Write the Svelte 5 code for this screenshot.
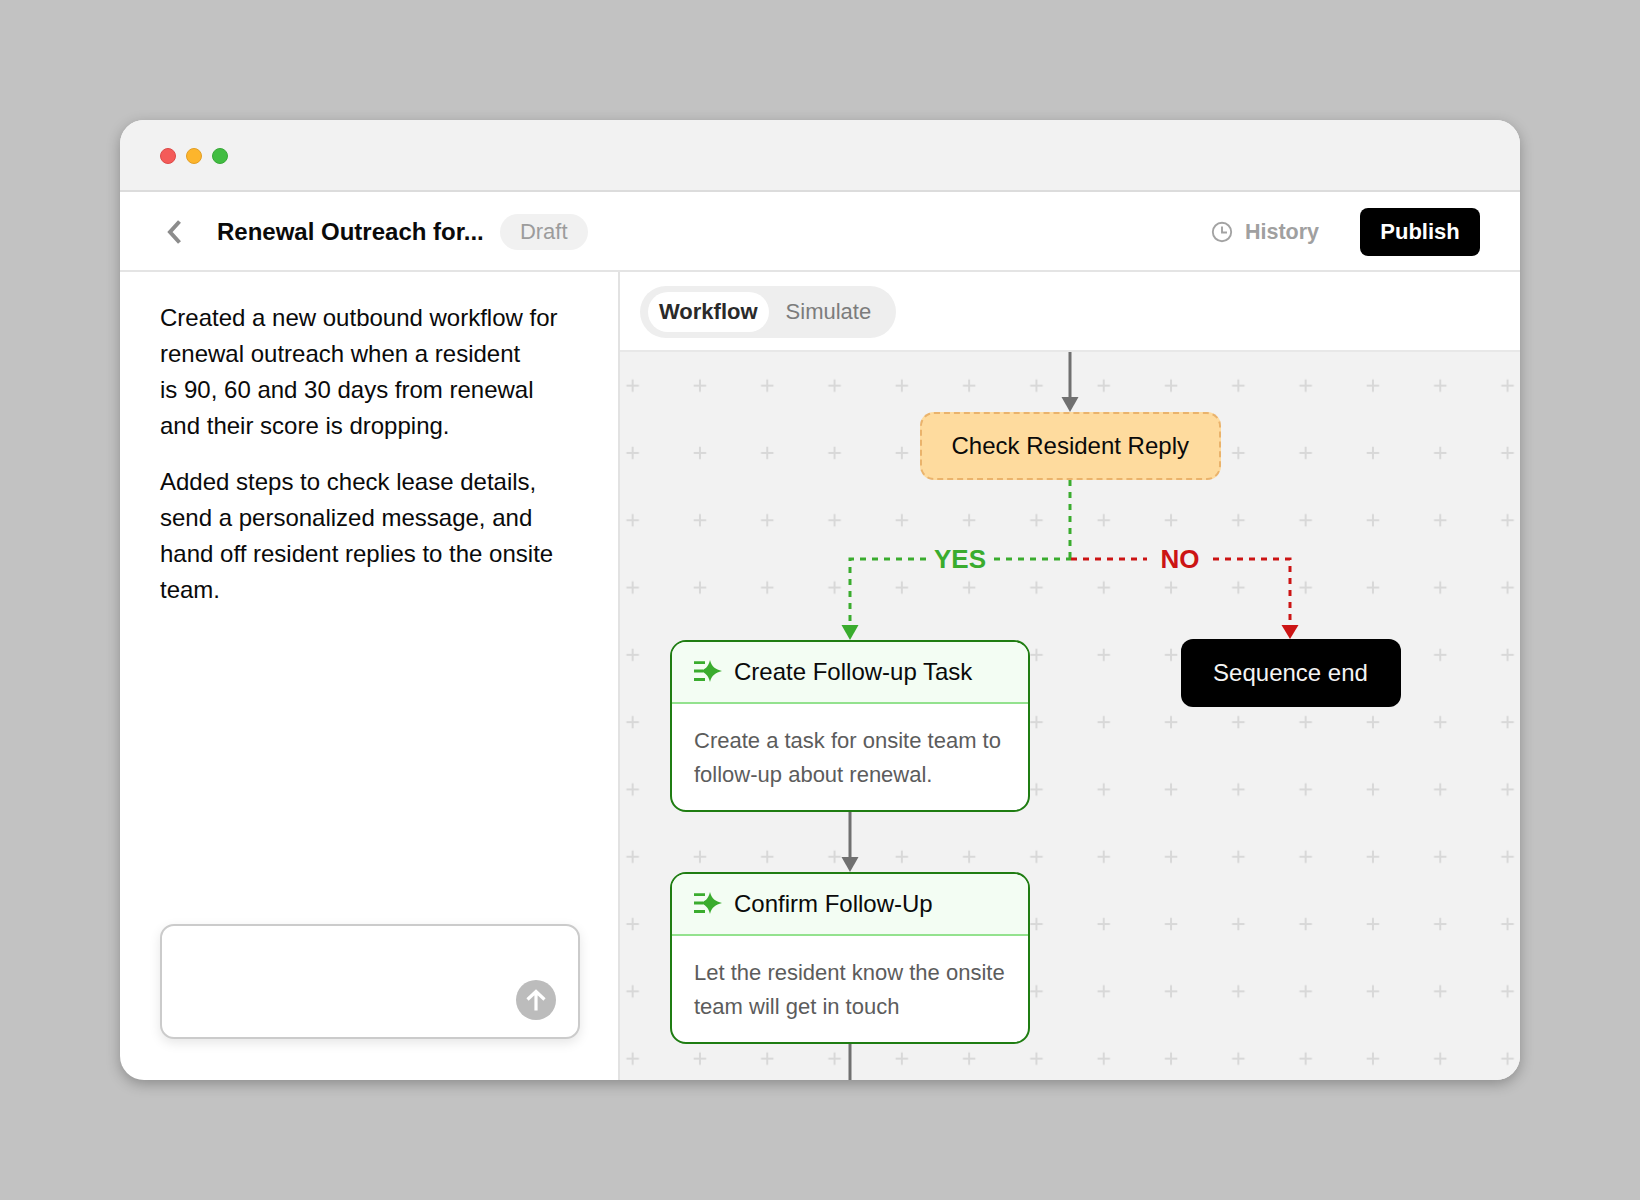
<script lang="ts">
    const tasks = [
        {
            title: 'Create Follow-up Task',
            lines: ['Create a task for onsite team to', 'follow-up about renewal.'],
            top: 288
        },
        {
            title: 'Confirm Follow-Up',
            lines: ['Let the resident know the onsite', 'team will get in touch'],
            top: 520
        }
    ];
</script>

<div class="page">
    <div class="window">
        <div class="titlebar">
            <span class="light red"></span>
            <span class="light yellow"></span>
            <span class="light green"></span>
        </div>

        <header class="topbar">
            <svg class="back" width="16" height="24" viewBox="0 0 16 24">
                <path d="M13.5 1.5 L4 12 L13.5 22.5" fill="none" stroke="#8c8c8c" stroke-width="4" />
            </svg>
            <h1>Renewal Outreach for...</h1>
            <span class="badge">Draft</span>
            <div class="spacer"></div>
            <svg class="clock" width="22" height="22" viewBox="0 0 22 22">
                <circle cx="11" cy="11" r="9.2" fill="none" stroke="#a3a3a3" stroke-width="1.9" />
                <path d="M11 5.5 V11.5 H16" fill="none" stroke="#a3a3a3" stroke-width="1.9" />
            </svg>
            <span class="history">History</span>
            <button class="publish">Publish</button>
        </header>

        <div class="body">
            <aside class="chat">
                <div class="message">
                    <p>
                        Created a new outbound workflow for<br />
                        renewal outreach when a resident<br />
                        is 90, 60 and 30 days from renewal<br />
                        and their score is dropping.
                    </p>
                    <p>
                        Added steps to check lease details,<br />
                        send a personalized message, and<br />
                        hand off resident replies to the onsite<br />
                        team.
                    </p>
                </div>
                <div class="composer">
                    <button class="send" aria-label="Send">
                        <svg width="24" height="24" viewBox="0 0 24 24">
                            <path d="M12 22.5 V4 M3.5 11.5 L12 3.5 L20.5 11.5" fill="none" stroke="#fff" stroke-width="3.2" />
                        </svg>
                    </button>
                </div>
            </aside>

            <section class="editor">
                <div class="tabbar">
                    <div class="tabs">
                        <span class="tab active">Workflow</span>
                        <span class="tab">Simulate</span>
                    </div>
                </div>

                <div class="canvas">
                    <svg class="wires" width="900" height="728" viewBox="0 0 900 728">
                        <defs>
                            <pattern id="plus" x="-21" y="0" width="67.3" height="67.3" patternUnits="userSpaceOnUse">
                                <path d="M33.65 27.4 V39.9 M27.4 33.65 H39.9" stroke="#d8d8d8" stroke-width="2" />
                            </pattern>
                        </defs>
                        <rect width="900" height="728" fill="url(#plus)" />

                        <!-- incoming -->
                        <path d="M450 0 V46" class="solid" />
                        <path d="M441.5 45 H458.5 L450 60 Z" fill="#707070" />

                        <!-- yes branch -->
                        <path d="M450 128 V207" class="dash yes" />
                        <path d="M374 207 H451" class="dash yes" />
                        <path d="M306 207 H230 V274" class="dash yes" />
                        <path d="M221.5 273 H238.5 L230 288 Z" fill="#3aac2e" />
                        <text x="340" y="215.5" class="label" fill="#3aac2e">YES</text>

                        <!-- no branch -->
                        <path d="M451 207 H527" class="dash no" />
                        <path d="M593 207 H670 V274" class="dash no" />
                        <path d="M661.5 273 H678.5 L670 287 Z" fill="#cc1414" />
                        <text x="560" y="215.5" class="label" fill="#cc1414">NO</text>

                        <!-- between the tasks -->
                        <path d="M230 460 V506" class="solid" />
                        <path d="M221.5 505 H238.5 L230 520 Z" fill="#707070" />
                        <path d="M230 691 V728" class="solid" />
                    </svg>

                    <div class="node check">Check Resident Reply</div>

                    {#each tasks as task}
                        <div class="node task" style="top: {task.top}px">
                            <div class="task-head">
                                <svg width="28" height="24" viewBox="0 0 28 24">
                                    <path d="M0 2.7 H11 M0 11 H9 M0 19.5 H11" stroke="#3aac2e" stroke-width="2.8" />
                                    <path d="M16 0 C17.5 6.5 21.5 9.5 28 11 C21.5 12.5 17.5 15.5 16 22 C14.5 15.5 11 12.5 6.5 11 C11 9.5 14.5 6.5 16 0 Z" fill="#3aac2e" />
                                </svg>
                                <span>{task.title}</span>
                            </div>
                            <div class="task-body">
                                {#each task.lines as line}
                                    <div>{line}</div>
                                {/each}
                            </div>
                        </div>
                    {/each}

                    <div class="node end">Sequence end</div>
                </div>
            </section>
        </div>
    </div>
</div>

<style>
    :global(body) {
        margin: 0;
        background: #c2c2c2;
    }

    .page {
        width: 1640px;
        height: 1200px;
        display: flex;
        align-items: center;
        justify-content: center;
        font-family: 'Liberation Sans', Arial, sans-serif;
        color: #0a0a0a;
    }

    .window {
        width: 1400px;
        height: 960px;
        display: flex;
        flex-direction: column;
        background: #fff;
        border-radius: 24px;
        overflow: hidden;
        box-shadow: 0 4px 14px rgba(0, 0, 0, 0.28);
    }

    .titlebar {
        flex: 0 0 72px;
        box-sizing: border-box;
        display: flex;
        align-items: center;
        gap: 10px;
        padding: 2px 0 0 40px;
        background: #f2f2f2;
        border-bottom: 2px solid #dcdcdc;
    }

    .light {
        width: 16px;
        height: 16px;
        box-sizing: border-box;
        border-radius: 50%;
        border: 1px solid;
    }
    .red { background: #f45b59; border-color: #dd4a48; }
    .yellow { background: #fdb52c; border-color: #e29e24; }
    .green { background: #42bd42; border-color: #38a838; }

    .topbar {
        flex: 0 0 80px;
        box-sizing: border-box;
        display: flex;
        align-items: center;
        padding: 2px 40px 0 46px;
        border-bottom: 2px solid #e4e4e4;
    }

    .back { margin-right: 35px; }

    h1 {
        margin: 0 16px 0 0;
        font-size: 24px;
        font-weight: 700;
    }

    .badge {
        width: 88px;
        height: 36px;
        display: flex;
        align-items: center;
        justify-content: center;
        border-radius: 18px;
        background: #f1f1f1;
        color: #9c9c9c;
        font-size: 22px;
    }

    .spacer { flex: 1; }

    .clock { margin-right: 12px; }

    .history {
        margin-right: 41px;
        color: #a0a0a0;
        font-size: 21.5px;
        font-weight: 700;
    }

    .publish {
        width: 120px;
        height: 48px;
        border: none;
        border-radius: 8px;
        background: #000;
        color: #fff;
        font: 700 22px 'Liberation Sans', Arial, sans-serif;
    }

    .body {
        flex: 1;
        min-height: 0;
        display: flex;
    }

    .chat {
        flex: 0 0 500px;
        box-sizing: border-box;
        display: flex;
        flex-direction: column;
        justify-content: space-between;
        padding: 28px 38px 41px 40px;
        border-right: 2px solid #e2e2e2;
    }

    .message p {
        margin: 0 0 20px;
        font-size: 24px;
        line-height: 36px;
    }

    .composer {
        position: relative;
        height: 115px;
        box-sizing: border-box;
        border: 2px solid #cbcbcb;
        border-radius: 14px;
        background: #fff;
        box-shadow: 0 4px 12px rgba(0, 0, 0, 0.1);
    }

    .send {
        position: absolute;
        right: 22px;
        bottom: 17px;
        width: 40px;
        height: 40px;
        padding: 0;
        display: flex;
        align-items: center;
        justify-content: center;
        border: none;
        border-radius: 50%;
        background: #bcbcbc;
    }

    .editor {
        flex: 1;
        min-width: 0;
        display: flex;
        flex-direction: column;
    }

    .tabbar {
        flex: 0 0 80px;
        box-sizing: border-box;
        display: flex;
        align-items: center;
        padding: 2px 0 0 20px;
        border-bottom: 2px solid #e8e8e8;
    }

    .tabs {
        display: flex;
        align-items: center;
        gap: 6px;
        height: 52px;
        width: 256px;
        box-sizing: border-box;
        padding: 0 8px;
        border-radius: 26px;
        background: #eeeeee;
    }

    .tab {
        padding: 0 11px;
        color: #7c7c7c;
        font-size: 22px;
    }

    .tab.active {
        height: 40px;
        line-height: 40px;
        border-radius: 20px;
        background: #fff;
        color: #2a2a2a;
        font-weight: 700;
    }

    .canvas {
        position: relative;
        flex: 1;
        min-height: 0;
        overflow: hidden;
        background: #f2f2f2;
    }

    .wires {
        position: absolute;
        left: 0;
        top: 0;
    }

    .solid {
        fill: none;
        stroke: #707070;
        stroke-width: 3;
    }

    .dash {
        fill: none;
        stroke-width: 3;
        stroke-dasharray: 6 6;
    }
    .yes { stroke: #3aac2e; }
    .no { stroke: #cc1414; }

    .label {
        font-size: 26px;
        font-weight: 700;
        text-anchor: middle;
    }

    .node {
        position: absolute;
        box-sizing: border-box;
    }

    .check {
        left: 299.5px;
        top: 60px;
        width: 301.5px;
        height: 68px;
        display: flex;
        align-items: center;
        justify-content: center;
        border: 2px dashed #eab36c;
        border-radius: 14px;
        background: #fedb9e;
        font-size: 24px;
    }

    .end {
        left: 560.5px;
        top: 287px;
        width: 220px;
        height: 68px;
        display: flex;
        align-items: center;
        justify-content: center;
        border-radius: 12px;
        background: #000;
        color: #f4f4f4;
        font-size: 24px;
    }

    .task {
        left: 50px;
        width: 360px;
        height: 172px;
        overflow: hidden;
        border: 2.5px solid #1f7d12;
        border-radius: 16px;
        background: #fff;
    }

    .task-head {
        height: 60px;
        display: flex;
        align-items: center;
        gap: 12px;
        padding-left: 22px;
        border-bottom: 2px solid #93e28e;
        background: #f3fdf3;
        font-size: 24px;
    }

    .task-body {
        padding: 20px 22px 0;
        color: #5c5c5c;
        font-size: 22px;
        line-height: 34px;
    }
</style>
